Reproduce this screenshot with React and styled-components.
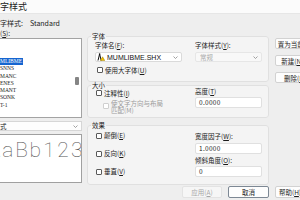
import React from "react";
import styled, { createGlobalStyle } from "styled-components";

const GlobalStyle = createGlobalStyle`
  html, body { margin: 0; padding: 0; }
  body { width: 300px; height: 200px; overflow: hidden; background: #eeeeee; }
`;

const Window = styled.div`
  width: 300px;
  height: 200px;
  overflow: hidden;
  background: #eeeeee;
  font-family: "Noto Sans CJK SC", "Noto Sans", sans-serif;
  font-size: 6.5px;
  color: #1b1b1b;
  display: flex;
  flex-direction: column;
`;

const TitleBar = styled.div`
  flex: none;
  height: 14px;
  box-sizing: border-box;
  background: #fbfbfb;
  border-bottom: 1px solid #e6e6e6;
  font-size: 9px;
  line-height: 13px;
  white-space: nowrap;
`;

const Body = styled.div`
  flex: 1;
  display: flex;
  flex-direction: column;
  padding-top: 4px;
`;

const CurrentRow = styled.div`
  display: flex;
  gap: 7px;
  height: 10px;
  line-height: 10px;
  font-size: 7px;
  white-space: nowrap;
`;

const Main = styled.div`
  display: grid;
  grid-template-columns: 82px 182px 48px;
  column-gap: 5px;
  row-gap: 1px;
`;

const LeftCol = styled.div`
  display: flex;
  flex-direction: column;
`;

const SmallLabel = styled.div`
  margin-top: 1px;
  height: 9px;
  line-height: 9px;
  white-space: nowrap;
`;

const ListBox = styled.div`
  height: 80px;
  box-sizing: border-box;
  background: #ffffff;
  border: 1px solid #a3a3a3;
  border-left: none;
  display: flex;
`;

const ListItems = styled.div`
  flex: 1;
  padding-top: 19px;
  display: flex;
  flex-direction: column;
  align-items: flex-start;
`;

const ListItem = styled.div`
  height: 7.25px;
  line-height: 7.25px;
  font-family: "Liberation Serif", serif;
  font-size: 5.5px;
  padding-right: 1px;
  background: ${(p) => (p.$selected ? "#1565d0" : "transparent")};
  color: ${(p) => (p.$selected ? "#ffffff" : "#222222")};
`;

const ScrollTrack = styled.div`
  width: 4px;
  margin-right: 2px;
`;

const Thumb = styled.div`
  margin-top: 38px;
  height: 8px;
  background: #858585;
  border-radius: 1px;
`;

const Dropdown = styled.div`
  margin-top: 3px;
  height: 10px;
  box-sizing: border-box;
  background: #fdfdfd;
  border: 1px solid #d6d6d6;
  border-left: none;
  display: flex;
  align-items: center;
  justify-content: space-between;
  padding-right: 3px;
  line-height: 8px;
`;

const Preview = styled.div`
  margin-top: 3px;
  height: 49px;
  box-sizing: border-box;
  background: #ffffff;
  border: 1px solid #a0a0a0;
  border-left: none;
  overflow: hidden;
  padding-top: 5px;
`;

const PreviewText = styled.div`
  display: flex;
  margin-left: -13px;
  font-family: Roboto, Lato, "Liberation Sans", sans-serif;
  font-weight: 100;
  font-size: 21px;
  line-height: 21px;
  color: #555555;
`;

const Glyph = styled.span`
  flex: none;
  width: 13.8px;
  text-align: center;
`;

const MidCol = styled.div`
  display: flex;
  flex-direction: column;
  padding-top: 4px;
`;

const Group = styled.fieldset`
  margin: ${(p) => p.$mt || 0}px 0 0 0;
  padding: 0 6px ${(p) => p.$pb}px 7px;
  border: 1px solid #e0e0e0;
  border-radius: 3px;
  background: #f4f4f4;
  min-width: 0;
`;

const Legend = styled.legend`
  padding: 0 1px;
  margin-left: -4px;
  line-height: ${(p) => p.$lh}px;
`;

const GroupGrid = styled.div`
  display: grid;
  grid-template-columns: 87px 67px;
  column-gap: 13px;
`;

const Col = styled.div`
  display: flex;
  flex-direction: column;
`;

const FieldLabel = styled.div`
  line-height: ${(p) => p.$lh || 7}px;
  margin-top: ${(p) => p.$mt || 0}px;
  white-space: nowrap;
`;

const Combo = styled.div`
  height: 10px;
  box-sizing: border-box;
  margin-top: ${(p) => p.$mt || 0}px;
  background: ${(p) => (p.$disabled ? "#f8f8f8" : "#ffffff")};
  border: 1px solid ${(p) => (p.$disabled ? "#e6e6e6" : "#dadada")};
  border-radius: 2px;
  display: flex;
  align-items: center;
  gap: 2px;
  padding: 0 3px 0 1px;
  color: ${(p) => (p.$disabled ? "#a8a8a8" : "#111111")};
`;

const ComboText = styled.span`
  flex: 1;
  white-space: nowrap;
  font-family: ${(p) => (p.$latin ? '"Liberation Sans", sans-serif' : "inherit")};
  font-size: ${(p) => (p.$latin ? "7px" : "inherit")};
  padding-left: ${(p) => (p.$latin ? 0 : 3)}px;
`;

const TextInput = styled.div`
  height: 11px;
  box-sizing: border-box;
  margin-top: ${(p) => p.$mt || 0}px;
  background: #ffffff;
  border: 1px solid #e0e0e0;
  border-radius: 2px;
  padding-left: 3px;
  line-height: 9px;
  letter-spacing: 0.3px;
`;

const CheckRow = styled.div`
  display: flex;
  align-items: ${(p) => (p.$top ? "flex-start" : "center")};
  gap: 2px;
  line-height: ${(p) => p.$lh || 7}px;
  margin-top: ${(p) => p.$mt || 0}px;
  margin-left: ${(p) => p.$ml || 0}px;
  color: ${(p) => (p.$disabled ? "#9c9c9c" : "inherit")};
  white-space: nowrap;
`;

const CheckBox = styled.span`
  flex: none;
  width: 6px;
  height: 6px;
  box-sizing: border-box;
  margin-top: ${(p) => p.$mt || 0}px;
  border: 1px solid ${(p) => (p.$disabled ? "#cfcfcf" : "#5a5a5a")};
  background: #ffffff;
  border-radius: 1px;
`;

const TwoLine = styled.span`
  display: flex;
  flex-direction: column;
`;

const CheckList = styled.div`
  display: flex;
  flex-direction: column;
  gap: 11px;
  margin-top: 3.5px;
`;

const RightCol = styled.div`
  display: flex;
  flex-direction: column;
  gap: 6px;
  padding-left: 1px;
  padding-top: 10px;
`;

const Button = styled.div`
  flex: none;
  width: ${(p) => p.$w}px;
  height: ${(p) => p.$h || 11}px;
  box-sizing: border-box;
  border: 1px solid ${(p) => (p.$primary ? "#7d8894" : p.$disabled ? "#e3e3e3" : "#d2d2d2")};
  background: ${(p) => (p.$disabled ? "#f6f6f6" : "#fdfdfd")};
  color: ${(p) => (p.$disabled ? "#a6a6a6" : "#1b1b1b")};
  border-radius: 2px;
  display: flex;
  align-items: center;
  justify-content: center;
  white-space: nowrap;
`;

const FooterActions = styled.div`
  grid-column: 2;
  display: flex;
  justify-content: flex-end;
  gap: 6px;
`;

const FooterRight = styled.div`
  grid-column: 3;
  padding-left: 1px;
`;

const Chevron = () => (
  <svg width="5" height="3" viewBox="0 0 5 3">
    <polyline points="0.5,0.5 2.5,2.5 4.5,0.5" fill="none" stroke="#8a8a8a" strokeWidth="0.8" />
  </svg>
);

const ShxIcon = () => (
  <svg width="8" height="8" viewBox="0 0 8 8">
    <path d="M1 7.5 L2.6 1 L4.2 7.5" fill="none" stroke="#111" strokeWidth="1" />
    <circle cx="2.6" cy="1" r="0.8" fill="#111" />
    <polygon points="3.4,7.6 7.8,7.6 5.6,3.8" fill="#f3c300" stroke="#a07c00" strokeWidth="0.5" />
  </svg>
);

const U = styled.span`
  text-decoration: underline;
`;

const items = [
  { name: "MLIBME", selected: true },
  { name: "SNNS" },
  { name: "MANC" },
  { name: "ENES" },
  { name: "MANT" },
  { name: "SONK" },
  { name: "T-1" },
];

export default function App() {
  return (
    <>
      <GlobalStyle />
      <Window>
        <TitleBar>字样式</TitleBar>
        <Body>
          <CurrentRow>
            <span>字样式:</span>
            <span>Standard</span>
          </CurrentRow>
          <Main>
            <LeftCol>
              <SmallLabel>
                (<U>S</U>):
              </SmallLabel>
              <ListBox>
                <ListItems>
                  {items.map((it) => (
                    <ListItem key={it.name} $selected={it.selected}>
                      {it.name}
                    </ListItem>
                  ))}
                </ListItems>
                <ScrollTrack>
                  <Thumb />
                </ScrollTrack>
              </ListBox>
              <Dropdown>
                <span>式</span>
                <Chevron />
              </Dropdown>
              <Preview>
                <PreviewText>
                  {"AaBb123".split("").map((c, i) => (
                    <Glyph key={i}>{c}</Glyph>
                  ))}
                </PreviewText>
              </Preview>
            </LeftCol>

            <MidCol>
              <Group $pb={7}>
                <Legend $lh={8}>字体</Legend>
                <GroupGrid>
                  <Col>
                    <FieldLabel $lh={8} $mt={1}>
                      字体名(<U>F</U>):
                    </FieldLabel>
                    <Combo $mt={3}>
                      <ShxIcon />
                      <ComboText $latin>MUMLIBME.SHX</ComboText>
                      <Chevron />
                    </Combo>
                    <CheckRow $lh={8} $mt={3.5} $ml={2}>
                      <CheckBox />
                      <span>
                        使用大字体(<U>U</U>)
                      </span>
                    </CheckRow>
                  </Col>
                  <Col>
                    <FieldLabel $lh={8} $mt={1}>
                      字体样式(<U>Y</U>):
                    </FieldLabel>
                    <Combo $mt={3} $disabled>
                      <ComboText>常规</ComboText>
                      <Chevron />
                    </Combo>
                  </Col>
                </GroupGrid>
              </Group>

              <Group $pb={2}>
                <Legend $lh={7}>大小</Legend>
                <GroupGrid>
                  <Col>
                    <CheckRow $mt={1} $ml={1}>
                      <CheckBox />
                      <span>
                        注释性(<U>I</U>)
                      </span>
                    </CheckRow>
                    <CheckRow $top $disabled $lh={7.5} $mt={3} $ml={8}>
                      <CheckBox $disabled $mt={3} />
                      <TwoLine>
                        <span>使文字方向与布局</span>
                        <span>匹配(M)</span>
                      </TwoLine>
                    </CheckRow>
                  </Col>
                  <Col>
                    <FieldLabel $mt={-1}>
                      高度(<U>T</U>)
                    </FieldLabel>
                    <TextInput $mt={2}>0.0000</TextInput>
                  </Col>
                </GroupGrid>
              </Group>

              <Group $mt={4} $pb={7}>
                <Legend $lh={7}>效果</Legend>
                <GroupGrid>
                  <Col>
                    <CheckList>
                      <CheckRow $ml={1}>
                        <CheckBox />
                        <span>
                          颠倒(<U>E</U>)
                        </span>
                      </CheckRow>
                      <CheckRow $ml={1}>
                        <CheckBox />
                        <span>
                          反向(<U>K</U>)
                        </span>
                      </CheckRow>
                      <CheckRow $ml={1}>
                        <CheckBox />
                        <span>
                          垂直(<U>V</U>)
                        </span>
                      </CheckRow>
                    </CheckList>
                  </Col>
                  <Col>
                    <FieldLabel $mt={4}>
                      宽度因子(<U>W</U>):
                    </FieldLabel>
                    <TextInput $mt={3}>1.0000</TextInput>
                    <FieldLabel $mt={3.5}>
                      倾斜角度(<U>O</U>):
                    </FieldLabel>
                    <TextInput $mt={1.5}>0</TextInput>
                  </Col>
                </GroupGrid>
              </Group>
            </MidCol>

            <RightCol>
              <Button $w={40}>
                置为当前(<U>C</U>)
              </Button>
              <Button $w={40}>
                新建(<U>N</U>)...
              </Button>
              <Button $w={40}>
                删除(<U>D</U>)
              </Button>
            </RightCol>

            <FooterActions>
              <Button $w={40} $h={12} $disabled>
                应用(<U>A</U>)
              </Button>
              <Button $w={41} $h={12} $primary>
                取消
              </Button>
            </FooterActions>
            <FooterRight>
              <Button $w={30} $h={12}>
                帮助(<U>H</U>)
              </Button>
            </FooterRight>
          </Main>
        </Body>
      </Window>
    </>
  );
}
